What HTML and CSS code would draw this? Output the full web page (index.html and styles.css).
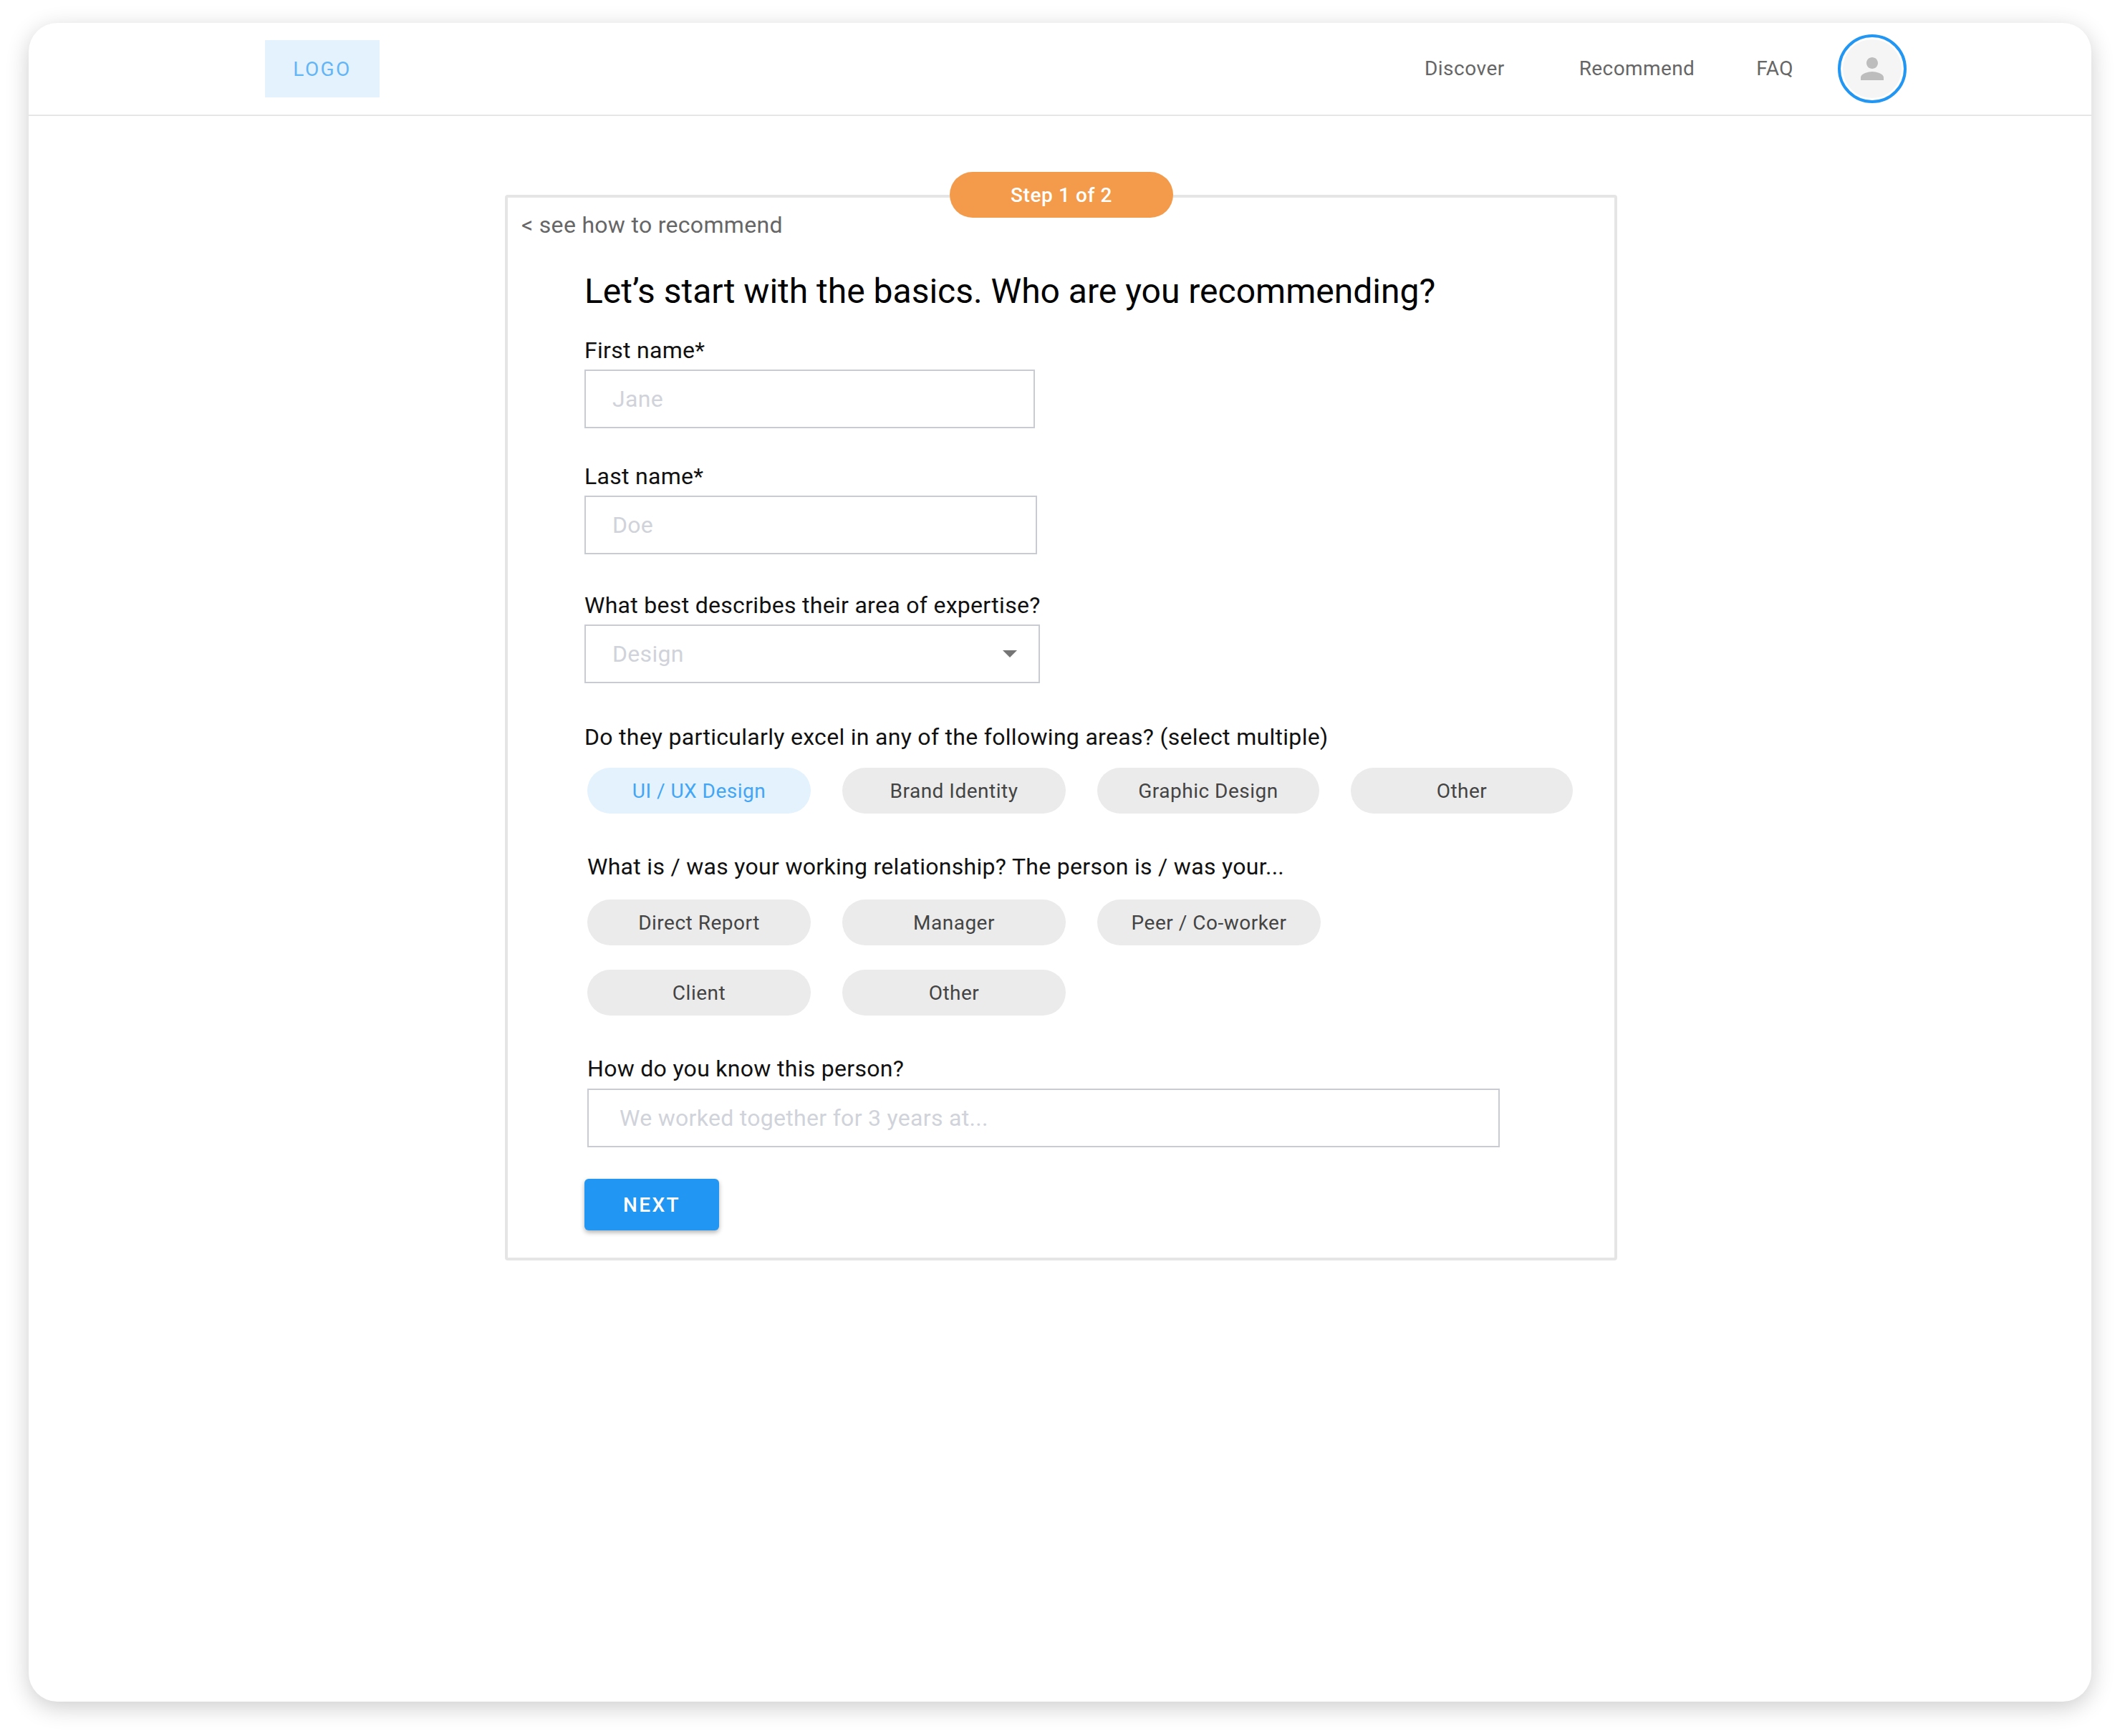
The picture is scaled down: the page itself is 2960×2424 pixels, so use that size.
FILE: index.html
```html
<!DOCTYPE html>
<html lang="en">
<head>
  <meta charset="UTF-8" />
  <meta name="viewport" content="width=device-width, initial-scale=1.0" />
  <title>Recommend</title>
  <link rel="stylesheet" href="styles.css">
</head>
<body>
  <div class="window">
    <header class="topbar">
      <div class="logo">LOGO</div>
      <nav class="nav">
        <a class="nav-discover" href="#">Discover</a>
        <a class="nav-recommend" href="#">Recommend</a>
        <a class="nav-faq" href="#">FAQ</a>
        <div class="avatar">
          <svg viewBox="0 0 24 24" width="48" height="48"><path d="M12 12c2.21 0 4-1.79 4-4s-1.79-4-4-4-4 1.79-4 4 1.79 4 4 4zm0 2c-2.67 0-8 1.34-8 4v2h16v-2c0-2.66-5.33-4-8-4z"/></svg>
        </div>
      </nav>
    </header>
    <main class="card">
      <div class="step">Step 1 of 2</div>
      <a class="back" href="#">&lt; see how to recommend</a>
      <h1>Let’s start with the basics. Who are you recommending?</h1>

      <label class="label label-first">First name*</label>
      <input class="input input-first" type="text" placeholder="Jane" />

      <label class="label label-last">Last name*</label>
      <input class="input input-last" type="text" placeholder="Doe" />

      <label class="label label-area">What best describes their area of expertise?</label>
      <div class="input select">
        <span>Design</span>
        <svg viewBox="0 0 20 10" width="20" height="10"><path d="M0 0h20L10 10z"/></svg>
      </div>

      <label class="label label-excel">Do they particularly excel in any of the following areas? (select multiple)</label>
      <div class="chips chips-excel">
        <button class="chip active">UI / UX Design</button>
        <button class="chip">Brand Identity</button>
        <button class="chip chip-narrow">Graphic Design</button>
        <button class="chip chip-narrow">Other</button>
      </div>

      <label class="label label-work">What is / was your working relationship? The person is / was your...</label>
      <div class="chips chips-work">
        <button class="chip">Direct Report</button>
        <button class="chip">Manager</button>
        <button class="chip">Peer / Co-worker</button>
        <button class="chip">Client</button>
        <button class="chip">Other</button>
      </div>

      <label class="label label-know">How do you know this person?</label>
      <input class="input input-know" type="text" placeholder="We worked together for 3 years at..." />

      <button class="next">NEXT</button>
    </main>
  </div>
</body>
</html>
```

FILE: styles.css
```css
* {
  box-sizing: border-box;
}
body {
  font-family: 'Roboto', sans-serif;
  margin: 0;
  padding: 32px 40px 48px;
  background-color: #ffffff;
}
a {
  text-decoration: none;
}
.window {
  height: 2344px;
  background-color: #ffffff;
  border-radius: 40px;
  box-shadow: 0 8px 32px rgba(0, 0, 0, 0.2);
}
.topbar {
  height: 130px;
  display: flex;
  align-items: center;
  justify-content: space-between;
  padding: 0 258px 0 330px;
  border-bottom: 2px solid #e6e6e6;
}
.logo {
  width: 160px;
  height: 80px;
  display: flex;
  align-items: center;
  justify-content: center;
  background-color: #e3f2fd;
  color: #64b5f6;
  font-size: 28px;
  letter-spacing: 2.4px;
}
.nav {
  display: flex;
  align-items: center;
  font-size: 28px;
  letter-spacing: 0.4px;
}
.nav a {
  color: #666666;
  position: relative;
  top: -1px;
}
.nav-discover {
  letter-spacing: 0.5px;
}
.nav-recommend {
  margin-left: 104px;
}
.nav-faq {
  margin-left: 86px;
}
.avatar {
  width: 96px;
  height: 96px;
  margin-left: 62px;
  display: flex;
  align-items: center;
  justify-content: center;
  border-radius: 50%;
  border: 4px solid #2196f3;
  background-color: #f5f5f5;
  box-shadow: inset 0 0 0 3px #ffffff;
}
.avatar svg {
  fill: #bdbdbd;
}
.card {
  position: relative;
  width: 1553px;
  height: 1488px;
  margin: 110px 0 0 665px;
  padding: 0 0 0 107px;
  border: 4px solid #e5e5e5;
  border-radius: 4px;
}
.step {
  position: absolute;
  top: -36px;
  left: 617px;
  width: 312px;
  height: 64px;
  display: flex;
  align-items: center;
  justify-content: center;
  border-radius: 32px;
  background-color: #f49b4b;
  color: #ffffff;
  font-size: 28px;
  font-weight: 500;
  letter-spacing: 0.6px;
}
.back {
  display: block;
  margin: 18px 0 0 -88px;
  height: 40px;
  line-height: 40px;
  color: #666666;
  font-size: 32px;
  letter-spacing: 0.3px;
}
h1 {
  margin: 43px 0 0;
  height: 60px;
  line-height: 60px;
  color: #000000;
  font-size: 48px;
  font-weight: 400;
}
.label {
  display: block;
  height: 40px;
  line-height: 40px;
  color: #111111;
  font-size: 32px;
  letter-spacing: 0.3px;
}
.label-first {
  margin-top: 32px;
}
.label-last {
  margin-top: 47px;
}
.label-area {
  margin-top: 51px;
}
.label-excel {
  margin-top: 55px;
}
.label-work {
  margin: 54px 0 0 4px;
}
.label-know {
  margin: 54px 0 0 4px;
}
.input {
  display: block;
  height: 82px;
  margin-top: 7px;
  padding: 0 37px;
  border: 2px solid #c8ccd2;
  border-radius: 0;
  background-color: #ffffff;
  color: #d0d3da;
  font-family: inherit;
  font-size: 32px;
  letter-spacing: 0.3px;
}
.input::placeholder {
  color: #d0d3da;
  opacity: 1;
}
.input-first {
  width: 629px;
}
.input-last {
  width: 632px;
}
.input-know {
  width: 1274px;
  margin: 8px 0 0 4px;
  padding: 0 43px;
}
.select {
  width: 636px;
  display: flex;
  align-items: center;
  justify-content: space-between;
  padding-right: 30px;
}
.select svg {
  fill: #757575;
}
.chips {
  display: flex;
  flex-wrap: wrap;
  gap: 34px 44px;
  margin: 23px 0 0 4px;
}
.chips-work {
  width: 1100px;
  margin-top: 26px;
}
.chip {
  width: 312px;
  height: 64px;
  border: none;
  border-radius: 32px;
  background-color: #ebebeb;
  color: #444444;
  font-family: inherit;
  font-size: 28px;
  letter-spacing: 0.5px;
}
.chip-narrow {
  width: 310px;
}
.chip.active {
  background-color: #e3f2fd;
  color: #42a5f5;
}
.next {
  display: block;
  width: 188px;
  height: 72px;
  margin-top: 44px;
  border: none;
  border-radius: 6px;
  background-color: #2196f3;
  color: #ffffff;
  font-family: inherit;
  font-size: 28px;
  font-weight: 500;
  letter-spacing: 2.4px;
  box-shadow: 0 3px 6px rgba(0, 0, 0, 0.3);
}
```
